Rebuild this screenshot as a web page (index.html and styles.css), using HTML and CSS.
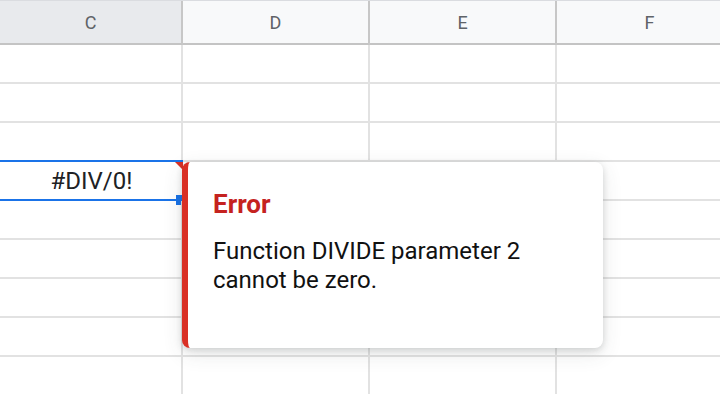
FILE: index.html
```html
<!DOCTYPE html>
<html lang="en">
<head>
    <meta charset="UTF-8">
    <meta name="viewport" content="width=device-width, initial-scale=1.0">
    <title>Sheet</title>
    <link rel="stylesheet" href="styles.css">
</head>
<body>
    <div class="sheet">
        <div class="grid">
            <div class="head selected">C</div>
            <div class="head">D</div>
            <div class="head">E</div>
            <div class="head">F</div>

            <div class="cell"></div><div class="cell"></div><div class="cell"></div><div class="cell"></div>
            <div class="cell"></div><div class="cell"></div><div class="cell"></div><div class="cell"></div>
            <div class="cell"></div><div class="cell"></div><div class="cell"></div><div class="cell"></div>
            <div class="cell active">#DIV/0!<span class="flag"></span><span class="handle"></span></div><div class="cell"></div><div class="cell"></div><div class="cell"></div>
            <div class="cell"></div><div class="cell"></div><div class="cell"></div><div class="cell"></div>
            <div class="cell"></div><div class="cell"></div><div class="cell"></div><div class="cell"></div>
            <div class="cell"></div><div class="cell"></div><div class="cell"></div><div class="cell"></div>
            <div class="cell"></div><div class="cell"></div><div class="cell"></div><div class="cell"></div>
            <div class="cell"></div><div class="cell"></div><div class="cell"></div><div class="cell"></div>
        </div>

        <div class="error-tip">
            <div class="error-title">Error</div>
            <div class="error-text">Function DIVIDE parameter 2<br>cannot be zero.</div>
        </div>
    </div>
</body>
</html>
```

FILE: styles.css
```css
body {
    margin: 0;
    font-family: Roboto, "Liberation Sans", Arial, sans-serif;
    background-color: #ffffff;
    overflow: hidden;
}
.sheet {
    position: relative;
    width: 720px;
    height: 394px;
    overflow: hidden;
}
.grid {
    display: grid;
    grid-template-columns: 183px 187px 187px 187px;
    grid-template-rows: 44px;
    grid-auto-rows: 39px;
    border-top: 1px solid #dadce0;
}
.head {
    box-sizing: border-box;
    display: flex;
    align-items: center;
    justify-content: center;
    background-color: #f8f9fa;
    color: #5f6368;
    font-size: 18px;
    border-right: 2px solid #c7c7c7;
    border-bottom: 2px solid #c4c4c4;
}
.head.selected {
    background-color: #e8eaed;
}
.cell {
    position: relative;
    box-sizing: border-box;
    border-right: 2px solid #e2e2e2;
    border-bottom: 2px solid #e2e2e2;
}
.active {
    display: flex;
    align-items: center;
    justify-content: center;
    font-size: 24px;
    color: #202124;
    border-top: 2px solid #1a73e8;
    border-bottom: 2px solid #1a73e8;
    border-right: none;
    margin-top: -2px;
    height: 41px;
}
.flag {
    position: absolute;
    right: 0;
    top: 0;
    width: 0;
    height: 0;
    border-top: 8px solid #d93025;
    border-left: 8px solid transparent;
}
.handle {
    position: absolute;
    right: -1px;
    bottom: -6px;
    width: 8px;
    height: 10px;
    background-color: #1a73e8;
}
.error-tip {
    position: absolute;
    left: 182px;
    top: 162px;
    width: 421px;
    height: 186px;
    box-sizing: border-box;
    padding: 27px 20px 0 25px;
    background-color: #ffffff;
    border-left: 6px solid #d93025;
    border-radius: 8px;
    box-shadow: 0 2px 6px rgba(60, 64, 67, 0.18), 0 6px 20px rgba(60, 64, 67, 0.12);
}
.error-title {
    color: #c5221f;
    font-size: 26px;
    font-weight: bold;
    line-height: 30px;
}
.error-text {
    margin-top: 18px;
    color: #111111;
    font-size: 24px;
    line-height: 29px;
}
```
